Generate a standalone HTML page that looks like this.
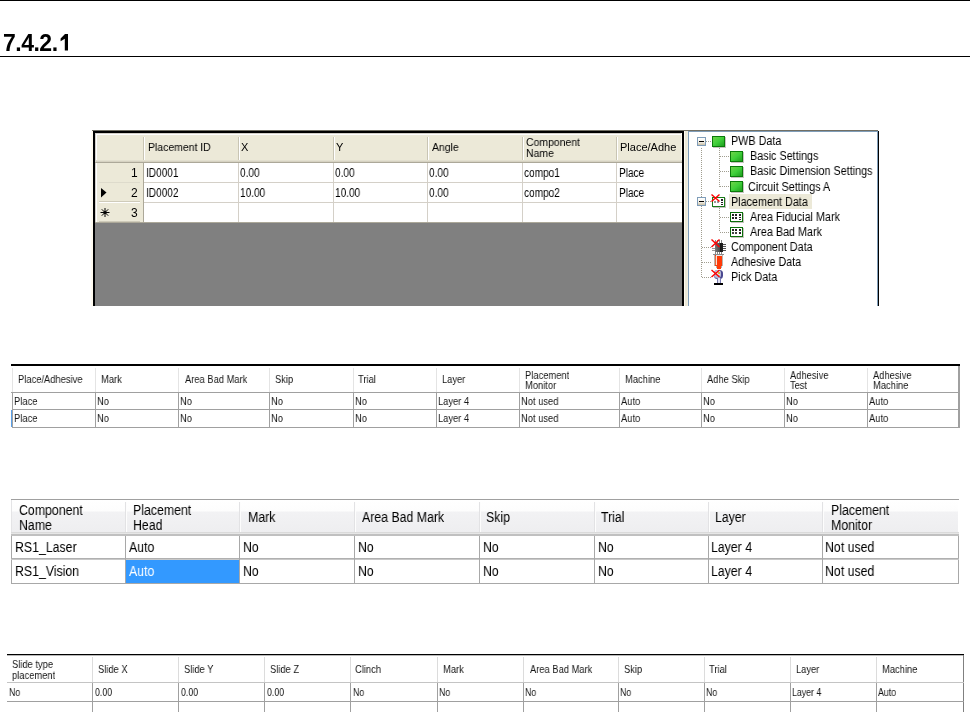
<!DOCTYPE html><html><head><meta charset="utf-8"><style>
html,body{margin:0;padding:0;background:#fff;width:970px;height:712px;overflow:hidden;position:relative}
div{position:absolute;box-sizing:border-box}
.t{font-family:"Liberation Sans",sans-serif;white-space:nowrap;color:#000;will-change:transform}
</style></head><body>
<div style="left:0px;top:0px;width:970px;height:1px;background:#000;"></div>
<div class="t" style="left:3px;top:32px;font-weight:bold;font-size:23px;line-height:23px;letter-spacing:-0.5px">7.4.2.</div>
<svg style="position:absolute;left:55px;top:30px" width="20" height="25" viewBox="55 30 20 25"><polygon points="65,34 68,34 68,50.6 64.8,50.6 64.8,38.8 60.6,41.3 60.6,38.4" fill="#000"/></svg>
<div style="left:0px;top:56px;width:970px;height:1px;background:#000;"></div>
<div style="left:92px;top:130px;width:592px;height:1px;background:#716f64;"></div>
<div style="left:684px;top:130px;width:194px;height:1px;background:#716f64;"></div>
<div style="left:91px;top:131px;width:2px;height:175px;background:#fffbf0;"></div>
<div style="left:93px;top:131px;width:591px;height:175px;background:#000;"></div>
<div style="left:95px;top:133px;width:587px;height:173px;background:#808080;"></div>
<div style="left:95px;top:133px;width:587px;height:30px;background:#ece9d8;"></div>
<div style="left:95px;top:133px;width:587px;height:1px;background:#d4d0c8;"></div>
<div style="left:96px;top:134px;width:586px;height:1px;background:#fff;"></div>
<div style="left:95px;top:134px;width:1px;height:29px;background:#d4d0c8;"></div>
<div style="left:96px;top:134px;width:1px;height:29px;background:#fff;"></div>
<div style="left:681px;top:133px;width:1px;height:30px;background:#fffbf0;"></div>
<div style="left:96px;top:160px;width:586px;height:1px;background:#e2dfcf;"></div>
<div style="left:96px;top:161px;width:586px;height:1px;background:#d6d2c2;"></div>
<div style="left:95px;top:162px;width:587px;height:1px;background:#aca899;"></div>
<div style="left:143px;top:137px;width:1px;height:23px;background:#c9c5b4;"></div>
<div style="left:144px;top:137px;width:1px;height:23px;background:#fff;"></div>
<div style="left:238px;top:137px;width:1px;height:23px;background:#c9c5b4;"></div>
<div style="left:239px;top:137px;width:1px;height:23px;background:#fff;"></div>
<div style="left:333px;top:137px;width:1px;height:23px;background:#c9c5b4;"></div>
<div style="left:334px;top:137px;width:1px;height:23px;background:#fff;"></div>
<div style="left:427px;top:137px;width:1px;height:23px;background:#c9c5b4;"></div>
<div style="left:428px;top:137px;width:1px;height:23px;background:#fff;"></div>
<div style="left:522px;top:137px;width:1px;height:23px;background:#c9c5b4;"></div>
<div style="left:523px;top:137px;width:1px;height:23px;background:#fff;"></div>
<div style="left:616px;top:137px;width:1px;height:23px;background:#c9c5b4;"></div>
<div style="left:617px;top:137px;width:1px;height:23px;background:#fff;"></div>
<div style="left:144px;top:163px;width:538px;height:60px;background:#fff;"></div>
<div style="left:95px;top:163px;width:48px;height:60px;background:#ece9d8;"></div>
<div style="left:95px;top:163px;width:1px;height:60px;background:#d4d0c8;"></div>
<div style="left:96px;top:163px;width:1px;height:60px;background:#fff;"></div>
<div style="left:144px;top:182px;width:538px;height:1px;background:#d4d0c8;"></div>
<div style="left:144px;top:202px;width:538px;height:1px;background:#d4d0c8;"></div>
<div style="left:144px;top:222px;width:538px;height:1px;background:#d4d0c8;"></div>
<div style="left:99px;top:182px;width:41px;height:1px;background:#dedbcc;"></div>
<div style="left:99px;top:201px;width:41px;height:1px;background:#cfcbba;"></div>
<div style="left:99px;top:202px;width:41px;height:1px;background:#fff;"></div>
<div style="left:99px;top:221px;width:41px;height:1px;background:#cfcbba;"></div>
<div style="left:99px;top:222px;width:41px;height:1px;background:#fff;"></div>
<div style="left:95px;top:222px;width:49px;height:1px;background:#aca899;"></div>
<div style="left:143px;top:163px;width:1px;height:60px;background:#aca899;"></div>
<div style="left:238px;top:163px;width:1px;height:60px;background:#d4d0c8;"></div>
<div style="left:333px;top:163px;width:1px;height:60px;background:#d4d0c8;"></div>
<div style="left:427px;top:163px;width:1px;height:60px;background:#d4d0c8;"></div>
<div style="left:522px;top:163px;width:1px;height:60px;background:#d4d0c8;"></div>
<div style="left:616px;top:163px;width:1px;height:60px;background:#d4d0c8;"></div>
<div style="left:144px;top:222px;width:538px;height:1px;background:#aca899;"></div>
<div class="t" style="left:148px;top:142px;font-size:11px;line-height:11px;letter-spacing:0px;transform:scaleX(0.95);transform-origin:0 0;">Placement ID</div>
<div class="t" style="left:241px;top:142px;font-size:11px;line-height:11px;letter-spacing:0px;transform:scaleX(0.95);transform-origin:0 0;">X</div>
<div class="t" style="left:336px;top:142px;font-size:11px;line-height:11px;letter-spacing:0px;transform:scaleX(0.95);transform-origin:0 0;">Y</div>
<div class="t" style="left:432px;top:142px;font-size:11px;line-height:11px;letter-spacing:0px;transform:scaleX(0.95);transform-origin:0 0;">Angle</div>
<div class="t" style="left:526px;top:137px;font-size:11px;line-height:11px;letter-spacing:0px;transform:scaleX(0.95);transform-origin:0 0;">Component</div>
<div class="t" style="left:526px;top:148px;font-size:11px;line-height:11px;letter-spacing:0px;transform:scaleX(0.95);transform-origin:0 0;">Name</div>
<div class="t" style="left:620px;top:142px;font-size:11px;line-height:11px;letter-spacing:0px;transform:scaleX(1.0);transform-origin:0 0;">Place/Adhe</div>
<div class="t" style="left:131px;top:167px;font-size:12px;line-height:12px;letter-spacing:-1px;">1</div>
<div class="t" style="left:131px;top:187px;font-size:12px;line-height:12px;letter-spacing:-1px;">2</div>
<div class="t" style="left:131px;top:207px;font-size:12px;line-height:12px;letter-spacing:-1px;">3</div>
<svg style="position:absolute;left:95px;top:183px" width="48" height="40" viewBox="95 183 48 40"><polygon points="101,188 106.5,192.5 101,197.5" fill="#000"/><g stroke="#000" stroke-width="1"><line x1="105" y1="208" x2="105" y2="217"/><line x1="100.5" y1="212.5" x2="109.5" y2="212.5"/><line x1="101.8" y1="209.3" x2="108.2" y2="215.7"/><line x1="108.2" y1="209.3" x2="101.8" y2="215.7"/></g><circle cx="105" cy="212.5" r="1.6" fill="#000"/></svg>
<div class="t" style="left:146px;top:167px;font-size:12px;line-height:12px;letter-spacing:0px;transform:scaleX(0.84);transform-origin:0 0;">ID0001</div>
<div class="t" style="left:240px;top:167px;font-size:12px;line-height:12px;letter-spacing:0px;transform:scaleX(0.84);transform-origin:0 0;">0.00</div>
<div class="t" style="left:335px;top:167px;font-size:12px;line-height:12px;letter-spacing:0px;transform:scaleX(0.84);transform-origin:0 0;">0.00</div>
<div class="t" style="left:429px;top:167px;font-size:12px;line-height:12px;letter-spacing:0px;transform:scaleX(0.84);transform-origin:0 0;">0.00</div>
<div class="t" style="left:524px;top:167px;font-size:12px;line-height:12px;letter-spacing:0px;transform:scaleX(0.84);transform-origin:0 0;">compo1</div>
<div class="t" style="left:619px;top:167px;font-size:12px;line-height:12px;letter-spacing:0px;transform:scaleX(0.84);transform-origin:0 0;">Place</div>
<div class="t" style="left:146px;top:187px;font-size:12px;line-height:12px;letter-spacing:0px;transform:scaleX(0.84);transform-origin:0 0;">ID0002</div>
<div class="t" style="left:240px;top:187px;font-size:12px;line-height:12px;letter-spacing:0px;transform:scaleX(0.84);transform-origin:0 0;">10.00</div>
<div class="t" style="left:335px;top:187px;font-size:12px;line-height:12px;letter-spacing:0px;transform:scaleX(0.84);transform-origin:0 0;">10.00</div>
<div class="t" style="left:429px;top:187px;font-size:12px;line-height:12px;letter-spacing:0px;transform:scaleX(0.84);transform-origin:0 0;">0.00</div>
<div class="t" style="left:524px;top:187px;font-size:12px;line-height:12px;letter-spacing:0px;transform:scaleX(0.84);transform-origin:0 0;">compo2</div>
<div class="t" style="left:619px;top:187px;font-size:12px;line-height:12px;letter-spacing:0px;transform:scaleX(0.84);transform-origin:0 0;">Place</div>
<div style="left:684px;top:131px;width:1px;height:175px;background:#fffbf0;"></div>
<div style="left:685px;top:131px;width:2px;height:175px;background:#ece9d8;"></div>
<div style="left:687px;top:131px;width:1px;height:175px;background:#f1efe2;"></div>
<div style="left:688px;top:131px;width:191px;height:175px;background:#7f9db9;"></div>
<div style="left:689px;top:132px;width:188px;height:174px;background:#fff;"></div>
<div style="left:878px;top:131px;width:1px;height:175px;background:#000;"></div>
<div style="left:729px;top:194px;width:83px;height:15px;background:#ece9d8"></div>
<svg style="position:absolute;left:688px;top:130px" width="190" height="176" viewBox="688 130 190 176" shape-rendering="crispEdges">
<defs>
<linearGradient id="gsq" x1="0" y1="0" x2="1" y2="1"><stop offset="0" stop-color="#6fd24a"/><stop offset="0.5" stop-color="#3fcf3a"/><stop offset="1" stop-color="#1f9f1f"/></linearGradient>
<linearGradient id="gexp" x1="0" y1="0" x2="0" y2="1"><stop offset="0" stop-color="#ffffff"/><stop offset="0.55" stop-color="#f4f2ea"/><stop offset="1" stop-color="#c9bfa6"/></linearGradient>
<linearGradient id="gchip" x1="0" y1="0" x2="1" y2="0"><stop offset="0" stop-color="#7a7a7a"/><stop offset="0.6" stop-color="#4a4a4a"/><stop offset="0.61" stop-color="#151515"/><stop offset="1" stop-color="#222"/></linearGradient>
<pattern id="dv" width="1" height="2" patternUnits="userSpaceOnUse"><rect width="1" height="1" fill="#a09d8f"/></pattern>
<pattern id="dh" width="2" height="1" patternUnits="userSpaceOnUse"><rect width="1" height="1" fill="#a09d8f"/></pattern>
</defs>
<!-- dotted lines -->
<rect x="701" y="147" width="1" height="131" fill="url(#dv)"/>
<rect x="706" y="141" width="6" height="1" fill="url(#dh)"/>
<rect x="706" y="201" width="6" height="1" fill="url(#dh)"/>
<rect x="702" y="247" width="10" height="1" fill="url(#dh)"/>
<rect x="702" y="262" width="10" height="1" fill="url(#dh)"/>
<rect x="702" y="277" width="10" height="1" fill="url(#dh)"/>
<rect x="719" y="148" width="1" height="39" fill="url(#dv)"/>
<rect x="720" y="156" width="10" height="1" fill="url(#dh)"/>
<rect x="720" y="171" width="10" height="1" fill="url(#dh)"/>
<rect x="720" y="186" width="10" height="1" fill="url(#dh)"/>
<rect x="719" y="208" width="1" height="24" fill="url(#dv)"/>
<rect x="720" y="217" width="10" height="1" fill="url(#dh)"/>
<rect x="720" y="232" width="10" height="1" fill="url(#dh)"/>
<!-- expanders -->
<g>
<rect x="697" y="137" width="9" height="9" fill="#7f9db9"/><rect x="698" y="138" width="7" height="7" fill="url(#gexp)"/><rect x="699" y="141" width="5" height="1" fill="#000"/>
<rect x="697" y="197" width="9" height="9" fill="#7f9db9"/><rect x="698" y="198" width="7" height="7" fill="url(#gexp)"/><rect x="699" y="201" width="5" height="1" fill="#000"/>
</g>
<!-- green squares -->
<g>
<rect x="713" y="137" width="13" height="11" fill="#c8c4c0"/>
<rect x="712" y="136" width="13" height="11" fill="#0a7a0a"/><rect x="713" y="137" width="11" height="9" fill="url(#gsq)"/>
<rect x="731" y="152" width="13" height="11" fill="#c8c4c0"/>
<rect x="730" y="151" width="13" height="11" fill="#0a7a0a"/><rect x="731" y="152" width="11" height="9" fill="url(#gsq)"/>
<rect x="731" y="167" width="13" height="11" fill="#c8c4c0"/>
<rect x="730" y="166" width="13" height="11" fill="#0a7a0a"/><rect x="731" y="167" width="11" height="9" fill="url(#gsq)"/>
<rect x="731" y="182" width="13" height="11" fill="#c8c4c0"/>
<rect x="730" y="181" width="13" height="11" fill="#0a7a0a"/><rect x="731" y="182" width="11" height="9" fill="url(#gsq)"/>
</g>
<!-- grid icons -->
<g>
<rect x="713" y="198" width="13" height="10" fill="#c8c4c0"/>
<rect x="712" y="197" width="13" height="10" fill="#1a7a1a"/><rect x="713" y="198" width="11" height="8" fill="#fff"/>
<rect x="714" y="201" width="2" height="2" fill="#999"/><rect x="717" y="201" width="2" height="2" fill="#999"/><rect x="721" y="199" width="2" height="2" fill="#222"/><rect x="721" y="202" width="2" height="1" fill="#222"/><rect x="721" y="204" width="2" height="1" fill="#222"/>
<rect x="731" y="213" width="13" height="10" fill="#c8c4c0"/>
<rect x="730" y="212" width="13" height="10" fill="#0b6f0b"/><rect x="731" y="213" width="11" height="8" fill="#fff"/>
<rect x="732" y="214" width="2" height="2" fill="#222"/><rect x="735" y="214" width="2" height="2" fill="#222"/><rect x="739" y="214" width="2" height="2" fill="#222"/>
<rect x="732" y="217" width="2" height="2" fill="#222"/><rect x="735" y="217" width="2" height="2" fill="#222"/><rect x="739" y="217" width="2" height="1" fill="#222"/><rect x="739" y="219" width="2" height="1" fill="#222"/>
<rect x="731" y="228" width="13" height="10" fill="#c8c4c0"/>
<rect x="730" y="227" width="13" height="10" fill="#0b6f0b"/><rect x="731" y="228" width="11" height="8" fill="#fff"/>
<rect x="732" y="229" width="2" height="2" fill="#222"/><rect x="735" y="229" width="2" height="2" fill="#222"/><rect x="739" y="229" width="2" height="2" fill="#222"/>
<rect x="732" y="232" width="2" height="2" fill="#444"/><rect x="735" y="232" width="2" height="2" fill="#444"/><rect x="739" y="232" width="2" height="2" fill="#222"/>
</g>
<!-- chip -->
<g>
<rect x="715" y="240" width="1" height="3" fill="#888"/><rect x="717" y="240" width="1" height="3" fill="#888"/><rect x="719" y="240" width="1" height="3" fill="#888"/><rect x="721" y="240" width="1" height="3" fill="#888"/>
<rect x="715" y="252" width="1" height="2" fill="#888"/><rect x="717" y="252" width="1" height="2" fill="#888"/><rect x="719" y="252" width="1" height="2" fill="#888"/><rect x="721" y="252" width="1" height="2" fill="#888"/>
<rect x="723" y="244" width="3" height="1" fill="#555"/><rect x="723" y="246" width="3" height="1" fill="#555"/><rect x="723" y="248" width="3" height="1" fill="#555"/><rect x="723" y="250" width="3" height="1" fill="#555"/>
<rect x="712" y="248" width="3" height="1" fill="#999"/><rect x="712" y="250" width="3" height="1" fill="#999"/>
<rect x="715" y="243" width="8" height="9" fill="url(#gchip)"/>
</g>
<!-- syringe -->
<g>
<rect x="713" y="254" width="11" height="1" fill="#8a8a8a"/>
<rect x="714" y="255" width="9" height="11" fill="#b8b4b0"/>
<rect x="715" y="255" width="7" height="11" fill="#ff3a08"/>
<rect x="715" y="256" width="1" height="9" fill="#e86a40"/>
<rect x="716" y="256" width="1" height="9" fill="#ffe0d0"/>
<rect x="716" y="255" width="6" height="1" fill="#e8e8e8"/>
<rect x="717" y="266" width="4" height="3" fill="#ff3a08"/>
<rect x="716" y="266" width="1" height="2" fill="#b0b0b0"/><rect x="721" y="266" width="1" height="2" fill="#b0b0b0"/>
</g>
<!-- nozzle -->
<g>
<rect x="714" y="270" width="9" height="9" rx="3.5" fill="#4a4890" shape-rendering="auto"/>
<rect x="714" y="270" width="7" height="8" rx="3" fill="#b8bad8" shape-rendering="auto"/>
<rect x="716" y="271" width="4" height="4" fill="#dcdde8"/>
<rect x="718" y="272" width="2" height="2" fill="#d8b040"/>
<rect x="717" y="278" width="4" height="5" fill="#7878b0"/>
<rect x="718" y="278" width="2" height="5" fill="#e0e0f0"/>
<rect x="714" y="283" width="9" height="2" fill="#000"/>
</g>
<!-- red Xs -->
<g stroke="#ff0000" stroke-width="1.4" shape-rendering="auto" fill="none">
<path d="M711.5 194.5 L719.5 201.5 M719.5 194.5 L711.5 201.5"/>
<path d="M711.5 239.5 L719.5 247 M719.5 239.5 L711.5 247"/>
<path d="M711.5 270 L719.5 277 M719.5 270 L711.5 277"/>
</g>
</svg>

<div class="t" style="left:731px;top:135px;font-size:12px;line-height:12px;letter-spacing:0px;transform:scaleX(0.9);transform-origin:0 0;">PWB Data</div>
<div class="t" style="left:750px;top:150px;font-size:12px;line-height:12px;letter-spacing:0px;transform:scaleX(0.9);transform-origin:0 0;">Basic Settings</div>
<div class="t" style="left:750px;top:165px;font-size:12px;line-height:12px;letter-spacing:0px;transform:scaleX(0.9);transform-origin:0 0;">Basic Dimension Settings</div>
<div class="t" style="left:748px;top:181px;font-size:12px;line-height:12px;letter-spacing:0px;transform:scaleX(0.9);transform-origin:0 0;">Circuit Settings A</div>
<div class="t" style="left:731px;top:196px;font-size:12px;line-height:12px;letter-spacing:0px;transform:scaleX(0.9);transform-origin:0 0;">Placement Data</div>
<div class="t" style="left:750px;top:211px;font-size:12px;line-height:12px;letter-spacing:0px;transform:scaleX(0.9);transform-origin:0 0;">Area Fiducial Mark</div>
<div class="t" style="left:750px;top:226px;font-size:12px;line-height:12px;letter-spacing:0px;transform:scaleX(0.9);transform-origin:0 0;">Area Bad Mark</div>
<div class="t" style="left:731px;top:241px;font-size:12px;line-height:12px;letter-spacing:0px;transform:scaleX(0.9);transform-origin:0 0;">Component Data</div>
<div class="t" style="left:731px;top:256px;font-size:12px;line-height:12px;letter-spacing:0px;transform:scaleX(0.9);transform-origin:0 0;">Adhesive Data</div>
<div class="t" style="left:731px;top:271px;font-size:12px;line-height:12px;letter-spacing:0px;transform:scaleX(0.9);transform-origin:0 0;">Pick Data</div>
<div style="left:11px;top:364px;width:949px;height:2px;background:#000;"></div>
<div style="left:12px;top:366px;width:947px;height:26px;background:#fff;"></div>
<div style="left:12px;top:368px;width:1px;height:24px;background:#e4e4e4;"></div>
<div style="left:95px;top:368px;width:1px;height:24px;background:#e4e4e4;"></div>
<div style="left:178px;top:368px;width:1px;height:24px;background:#e4e4e4;"></div>
<div style="left:269px;top:368px;width:1px;height:24px;background:#e4e4e4;"></div>
<div style="left:353px;top:368px;width:1px;height:24px;background:#e4e4e4;"></div>
<div style="left:436px;top:368px;width:1px;height:24px;background:#e4e4e4;"></div>
<div style="left:519px;top:368px;width:1px;height:24px;background:#e4e4e4;"></div>
<div style="left:619px;top:368px;width:1px;height:24px;background:#e4e4e4;"></div>
<div style="left:701px;top:368px;width:1px;height:24px;background:#e4e4e4;"></div>
<div style="left:784px;top:368px;width:1px;height:24px;background:#e4e4e4;"></div>
<div style="left:867px;top:368px;width:1px;height:24px;background:#e4e4e4;"></div>
<div style="left:958px;top:366px;width:1px;height:26px;background:#e4e4e4;"></div>
<div style="left:11px;top:392px;width:949px;height:1px;background:#a0a0a0;"></div>
<div style="left:12px;top:409px;width:947px;height:1px;background:#a0a0a0;"></div>
<div style="left:12px;top:427px;width:947px;height:1px;background:#a0a0a0;"></div>
<div style="left:12px;top:392px;width:1px;height:36px;background:#a0a0a0;"></div>
<div style="left:11px;top:410px;width:1px;height:17px;background:#5aa0e8;"></div>
<div style="left:95px;top:392px;width:1px;height:36px;background:#a0a0a0;"></div>
<div style="left:178px;top:392px;width:1px;height:36px;background:#a0a0a0;"></div>
<div style="left:269px;top:392px;width:1px;height:36px;background:#a0a0a0;"></div>
<div style="left:353px;top:392px;width:1px;height:36px;background:#a0a0a0;"></div>
<div style="left:436px;top:392px;width:1px;height:36px;background:#a0a0a0;"></div>
<div style="left:519px;top:392px;width:1px;height:36px;background:#a0a0a0;"></div>
<div style="left:619px;top:392px;width:1px;height:36px;background:#a0a0a0;"></div>
<div style="left:701px;top:392px;width:1px;height:36px;background:#a0a0a0;"></div>
<div style="left:784px;top:392px;width:1px;height:36px;background:#a0a0a0;"></div>
<div style="left:867px;top:392px;width:1px;height:36px;background:#a0a0a0;"></div>
<div style="left:958px;top:366px;width:2px;height:62px;background:#a0a0a0;"></div>
<div class="t" style="left:18px;top:374px;font-size:11px;line-height:11px;letter-spacing:0px;transform:scaleX(0.85);transform-origin:0 0;color:#151515">Place/Adhesive</div>
<div class="t" style="left:101px;top:374px;font-size:11px;line-height:11px;letter-spacing:0px;transform:scaleX(0.85);transform-origin:0 0;color:#151515">Mark</div>
<div class="t" style="left:185px;top:374px;font-size:11px;line-height:11px;letter-spacing:0px;transform:scaleX(0.85);transform-origin:0 0;color:#151515">Area Bad Mark</div>
<div class="t" style="left:275px;top:374px;font-size:11px;line-height:11px;letter-spacing:0px;transform:scaleX(0.85);transform-origin:0 0;color:#151515">Skip</div>
<div class="t" style="left:358px;top:374px;font-size:11px;line-height:11px;letter-spacing:0px;transform:scaleX(0.85);transform-origin:0 0;color:#151515">Trial</div>
<div class="t" style="left:442px;top:374px;font-size:11px;line-height:11px;letter-spacing:0px;transform:scaleX(0.85);transform-origin:0 0;color:#151515">Layer</div>
<div class="t" style="left:625px;top:374px;font-size:11px;line-height:11px;letter-spacing:0px;transform:scaleX(0.85);transform-origin:0 0;color:#151515">Machine</div>
<div class="t" style="left:707px;top:374px;font-size:11px;line-height:11px;letter-spacing:0px;transform:scaleX(0.85);transform-origin:0 0;color:#151515">Adhe Skip</div>
<div class="t" style="left:525px;top:370px;font-size:11px;line-height:11px;letter-spacing:0px;transform:scaleX(0.85);transform-origin:0 0;color:#151515">Placement</div>
<div class="t" style="left:525px;top:380px;font-size:11px;line-height:11px;letter-spacing:0px;transform:scaleX(0.85);transform-origin:0 0;color:#151515">Monitor</div>
<div class="t" style="left:790px;top:370px;font-size:11px;line-height:11px;letter-spacing:0px;transform:scaleX(0.85);transform-origin:0 0;color:#151515">Adhesive</div>
<div class="t" style="left:790px;top:380px;font-size:11px;line-height:11px;letter-spacing:0px;transform:scaleX(0.85);transform-origin:0 0;color:#151515">Test</div>
<div class="t" style="left:873px;top:370px;font-size:11px;line-height:11px;letter-spacing:0px;transform:scaleX(0.85);transform-origin:0 0;color:#151515">Adhesive</div>
<div class="t" style="left:873px;top:380px;font-size:11px;line-height:11px;letter-spacing:0px;transform:scaleX(0.85);transform-origin:0 0;color:#151515">Machine</div>
<div class="t" style="left:14px;top:396px;font-size:11px;line-height:11px;letter-spacing:0px;transform:scaleX(0.85);transform-origin:0 0;color:#151515">Place</div>
<div class="t" style="left:97px;top:396px;font-size:11px;line-height:11px;letter-spacing:0px;transform:scaleX(0.85);transform-origin:0 0;color:#151515">No</div>
<div class="t" style="left:180px;top:396px;font-size:11px;line-height:11px;letter-spacing:0px;transform:scaleX(0.85);transform-origin:0 0;color:#151515">No</div>
<div class="t" style="left:271px;top:396px;font-size:11px;line-height:11px;letter-spacing:0px;transform:scaleX(0.85);transform-origin:0 0;color:#151515">No</div>
<div class="t" style="left:355px;top:396px;font-size:11px;line-height:11px;letter-spacing:0px;transform:scaleX(0.85);transform-origin:0 0;color:#151515">No</div>
<div class="t" style="left:438px;top:396px;font-size:11px;line-height:11px;letter-spacing:0px;transform:scaleX(0.85);transform-origin:0 0;color:#151515">Layer 4</div>
<div class="t" style="left:521px;top:396px;font-size:11px;line-height:11px;letter-spacing:0px;transform:scaleX(0.85);transform-origin:0 0;color:#151515">Not used</div>
<div class="t" style="left:621px;top:396px;font-size:11px;line-height:11px;letter-spacing:0px;transform:scaleX(0.85);transform-origin:0 0;color:#151515">Auto</div>
<div class="t" style="left:703px;top:396px;font-size:11px;line-height:11px;letter-spacing:0px;transform:scaleX(0.85);transform-origin:0 0;color:#151515">No</div>
<div class="t" style="left:786px;top:396px;font-size:11px;line-height:11px;letter-spacing:0px;transform:scaleX(0.85);transform-origin:0 0;color:#151515">No</div>
<div class="t" style="left:869px;top:396px;font-size:11px;line-height:11px;letter-spacing:0px;transform:scaleX(0.85);transform-origin:0 0;color:#151515">Auto</div>
<div class="t" style="left:14px;top:413px;font-size:11px;line-height:11px;letter-spacing:0px;transform:scaleX(0.85);transform-origin:0 0;color:#151515">Place</div>
<div class="t" style="left:97px;top:413px;font-size:11px;line-height:11px;letter-spacing:0px;transform:scaleX(0.85);transform-origin:0 0;color:#151515">No</div>
<div class="t" style="left:180px;top:413px;font-size:11px;line-height:11px;letter-spacing:0px;transform:scaleX(0.85);transform-origin:0 0;color:#151515">No</div>
<div class="t" style="left:271px;top:413px;font-size:11px;line-height:11px;letter-spacing:0px;transform:scaleX(0.85);transform-origin:0 0;color:#151515">No</div>
<div class="t" style="left:355px;top:413px;font-size:11px;line-height:11px;letter-spacing:0px;transform:scaleX(0.85);transform-origin:0 0;color:#151515">No</div>
<div class="t" style="left:438px;top:413px;font-size:11px;line-height:11px;letter-spacing:0px;transform:scaleX(0.85);transform-origin:0 0;color:#151515">Layer 4</div>
<div class="t" style="left:521px;top:413px;font-size:11px;line-height:11px;letter-spacing:0px;transform:scaleX(0.85);transform-origin:0 0;color:#151515">Not used</div>
<div class="t" style="left:621px;top:413px;font-size:11px;line-height:11px;letter-spacing:0px;transform:scaleX(0.85);transform-origin:0 0;color:#151515">Auto</div>
<div class="t" style="left:703px;top:413px;font-size:11px;line-height:11px;letter-spacing:0px;transform:scaleX(0.85);transform-origin:0 0;color:#151515">No</div>
<div class="t" style="left:786px;top:413px;font-size:11px;line-height:11px;letter-spacing:0px;transform:scaleX(0.85);transform-origin:0 0;color:#151515">No</div>
<div class="t" style="left:869px;top:413px;font-size:11px;line-height:11px;letter-spacing:0px;transform:scaleX(0.85);transform-origin:0 0;color:#151515">Auto</div>
<div style="left:11px;top:499px;width:948px;height:1px;background:#a0a0a0;"></div>
<div style="left:11px;top:500px;width:947px;height:32px;background:linear-gradient(#ffffff 0,#fdfdfd 11px,#f2f2f4 12px,#eeeef0 32px)"></div>
<div style="left:11px;top:500px;width:1px;height:32px;background:#e4e4e6;"></div>
<div style="left:125px;top:502px;width:1px;height:30px;background:#e2e2e4;"></div>
<div style="left:126px;top:502px;width:1px;height:30px;background:#fdfdfd;"></div>
<div style="left:239px;top:502px;width:1px;height:30px;background:#e2e2e4;"></div>
<div style="left:240px;top:502px;width:1px;height:30px;background:#fdfdfd;"></div>
<div style="left:354px;top:502px;width:1px;height:30px;background:#e2e2e4;"></div>
<div style="left:355px;top:502px;width:1px;height:30px;background:#fdfdfd;"></div>
<div style="left:479px;top:502px;width:1px;height:30px;background:#e2e2e4;"></div>
<div style="left:480px;top:502px;width:1px;height:30px;background:#fdfdfd;"></div>
<div style="left:594px;top:502px;width:1px;height:30px;background:#e2e2e4;"></div>
<div style="left:595px;top:502px;width:1px;height:30px;background:#fdfdfd;"></div>
<div style="left:708px;top:502px;width:1px;height:30px;background:#e2e2e4;"></div>
<div style="left:709px;top:502px;width:1px;height:30px;background:#fdfdfd;"></div>
<div style="left:822px;top:502px;width:1px;height:30px;background:#e2e2e4;"></div>
<div style="left:823px;top:502px;width:1px;height:30px;background:#fdfdfd;"></div>
<div style="left:11px;top:532px;width:948px;height:1px;background:#dadada;"></div>
<div style="left:11px;top:533px;width:948px;height:1px;background:#e6e6e6;"></div>
<div style="left:11px;top:534px;width:948px;height:2px;background:#c0c0c0;"></div>
<div style="left:11px;top:536px;width:1px;height:48px;background:#a8a8a8;"></div>
<div style="left:958px;top:536px;width:1px;height:48px;background:#a8a8a8;"></div>
<div style="left:11px;top:558px;width:948px;height:1px;background:#b0b0b0;"></div>
<div style="left:11px;top:559px;width:948px;height:1px;background:#c8c8c8;"></div>
<div style="left:11px;top:583px;width:948px;height:1px;background:#a8a8a8;"></div>
<div style="left:125px;top:536px;width:1px;height:47px;background:#a8a8a8;"></div>
<div style="left:239px;top:536px;width:1px;height:47px;background:#a8a8a8;"></div>
<div style="left:354px;top:536px;width:1px;height:47px;background:#a8a8a8;"></div>
<div style="left:479px;top:536px;width:1px;height:47px;background:#a8a8a8;"></div>
<div style="left:594px;top:536px;width:1px;height:47px;background:#a8a8a8;"></div>
<div style="left:708px;top:536px;width:1px;height:47px;background:#a8a8a8;"></div>
<div style="left:822px;top:536px;width:1px;height:47px;background:#a8a8a8;"></div>
<div style="left:126px;top:560px;width:113px;height:23px;background:#3399ff;"></div>
<div class="t" style="left:19px;top:503px;font-size:14px;line-height:14px;letter-spacing:0px;transform:scaleX(0.88);transform-origin:0 0;">Component</div>
<div class="t" style="left:19px;top:518px;font-size:14px;line-height:14px;letter-spacing:0px;transform:scaleX(0.88);transform-origin:0 0;">Name</div>
<div class="t" style="left:133px;top:503px;font-size:14px;line-height:14px;letter-spacing:0px;transform:scaleX(0.88);transform-origin:0 0;">Placement</div>
<div class="t" style="left:133px;top:518px;font-size:14px;line-height:14px;letter-spacing:0px;transform:scaleX(0.88);transform-origin:0 0;">Head</div>
<div class="t" style="left:248px;top:510px;font-size:14px;line-height:14px;letter-spacing:0px;transform:scaleX(0.88);transform-origin:0 0;">Mark</div>
<div class="t" style="left:362px;top:510px;font-size:14px;line-height:14px;letter-spacing:0px;transform:scaleX(0.88);transform-origin:0 0;">Area Bad Mark</div>
<div class="t" style="left:486px;top:510px;font-size:14px;line-height:14px;letter-spacing:0px;transform:scaleX(0.88);transform-origin:0 0;">Skip</div>
<div class="t" style="left:601px;top:510px;font-size:14px;line-height:14px;letter-spacing:0px;transform:scaleX(0.88);transform-origin:0 0;">Trial</div>
<div class="t" style="left:715px;top:510px;font-size:14px;line-height:14px;letter-spacing:0px;transform:scaleX(0.88);transform-origin:0 0;">Layer</div>
<div class="t" style="left:831px;top:503px;font-size:14px;line-height:14px;letter-spacing:0px;transform:scaleX(0.88);transform-origin:0 0;">Placement</div>
<div class="t" style="left:831px;top:518px;font-size:14px;line-height:14px;letter-spacing:0px;transform:scaleX(0.88);transform-origin:0 0;">Monitor</div>
<div class="t" style="left:15px;top:540px;font-size:14px;line-height:14px;letter-spacing:0px;transform:scaleX(0.88);transform-origin:0 0;">RS1_Laser</div>
<div class="t" style="left:129px;top:540px;font-size:14px;line-height:14px;letter-spacing:0px;transform:scaleX(0.88);transform-origin:0 0;">Auto</div>
<div class="t" style="left:243px;top:540px;font-size:14px;line-height:14px;letter-spacing:0px;transform:scaleX(0.88);transform-origin:0 0;">No</div>
<div class="t" style="left:358px;top:540px;font-size:14px;line-height:14px;letter-spacing:0px;transform:scaleX(0.88);transform-origin:0 0;">No</div>
<div class="t" style="left:483px;top:540px;font-size:14px;line-height:14px;letter-spacing:0px;transform:scaleX(0.88);transform-origin:0 0;">No</div>
<div class="t" style="left:598px;top:540px;font-size:14px;line-height:14px;letter-spacing:0px;transform:scaleX(0.88);transform-origin:0 0;">No</div>
<div class="t" style="left:711px;top:540px;font-size:14px;line-height:14px;letter-spacing:0px;transform:scaleX(0.88);transform-origin:0 0;">Layer 4</div>
<div class="t" style="left:825px;top:540px;font-size:14px;line-height:14px;letter-spacing:0px;transform:scaleX(0.88);transform-origin:0 0;">Not used</div>
<div class="t" style="left:15px;top:564px;font-size:14px;line-height:14px;letter-spacing:0px;transform:scaleX(0.88);transform-origin:0 0;">RS1_Vision</div>
<div class="t" style="left:129px;top:564px;font-size:14px;line-height:14px;letter-spacing:0px;transform:scaleX(0.88);transform-origin:0 0;color:#fff">Auto</div>
<div class="t" style="left:243px;top:564px;font-size:14px;line-height:14px;letter-spacing:0px;transform:scaleX(0.88);transform-origin:0 0;">No</div>
<div class="t" style="left:358px;top:564px;font-size:14px;line-height:14px;letter-spacing:0px;transform:scaleX(0.88);transform-origin:0 0;">No</div>
<div class="t" style="left:483px;top:564px;font-size:14px;line-height:14px;letter-spacing:0px;transform:scaleX(0.88);transform-origin:0 0;">No</div>
<div class="t" style="left:598px;top:564px;font-size:14px;line-height:14px;letter-spacing:0px;transform:scaleX(0.88);transform-origin:0 0;">No</div>
<div class="t" style="left:711px;top:564px;font-size:14px;line-height:14px;letter-spacing:0px;transform:scaleX(0.88);transform-origin:0 0;">Layer 4</div>
<div class="t" style="left:825px;top:564px;font-size:14px;line-height:14px;letter-spacing:0px;transform:scaleX(0.88);transform-origin:0 0;">Not used</div>
<div style="left:7px;top:654px;width:957px;height:1px;background:#000;"></div>
<div style="left:7px;top:655px;width:957px;height:1px;background:#b8b8b8;"></div>
<div style="left:92px;top:657px;width:1px;height:25px;background:#dcdcdc;"></div>
<div style="left:178px;top:657px;width:1px;height:25px;background:#dcdcdc;"></div>
<div style="left:264px;top:657px;width:1px;height:25px;background:#dcdcdc;"></div>
<div style="left:350px;top:657px;width:1px;height:25px;background:#dcdcdc;"></div>
<div style="left:437px;top:657px;width:1px;height:25px;background:#dcdcdc;"></div>
<div style="left:523px;top:657px;width:1px;height:25px;background:#dcdcdc;"></div>
<div style="left:618px;top:657px;width:1px;height:25px;background:#dcdcdc;"></div>
<div style="left:704px;top:657px;width:1px;height:25px;background:#dcdcdc;"></div>
<div style="left:790px;top:657px;width:1px;height:25px;background:#dcdcdc;"></div>
<div style="left:876px;top:657px;width:1px;height:25px;background:#dcdcdc;"></div>
<div style="left:963px;top:655px;width:1px;height:57px;background:#808080;"></div>
<div style="left:7px;top:682px;width:957px;height:1px;background:#c4c4c4;"></div>
<div style="left:7px;top:701px;width:957px;height:1px;background:#a0a0a0;"></div>
<div style="left:92px;top:683px;width:1px;height:29px;background:#a0a0a0;"></div>
<div style="left:178px;top:683px;width:1px;height:29px;background:#a0a0a0;"></div>
<div style="left:264px;top:683px;width:1px;height:29px;background:#a0a0a0;"></div>
<div style="left:350px;top:683px;width:1px;height:29px;background:#a0a0a0;"></div>
<div style="left:437px;top:683px;width:1px;height:29px;background:#a0a0a0;"></div>
<div style="left:523px;top:683px;width:1px;height:29px;background:#a0a0a0;"></div>
<div style="left:618px;top:683px;width:1px;height:29px;background:#a0a0a0;"></div>
<div style="left:704px;top:683px;width:1px;height:29px;background:#a0a0a0;"></div>
<div style="left:790px;top:683px;width:1px;height:29px;background:#a0a0a0;"></div>
<div style="left:876px;top:683px;width:1px;height:29px;background:#a0a0a0;"></div>
<div class="t" style="left:12px;top:659px;font-size:11px;line-height:11px;letter-spacing:0px;transform:scaleX(0.85);transform-origin:0 0;color:#151515">Slide type</div>
<div class="t" style="left:12px;top:670px;font-size:11px;line-height:11px;letter-spacing:0px;transform:scaleX(0.85);transform-origin:0 0;color:#151515">placement</div>
<div class="t" style="left:98px;top:664px;font-size:11px;line-height:11px;letter-spacing:0px;transform:scaleX(0.85);transform-origin:0 0;color:#151515">Slide X</div>
<div class="t" style="left:184px;top:664px;font-size:11px;line-height:11px;letter-spacing:0px;transform:scaleX(0.85);transform-origin:0 0;color:#151515">Slide Y</div>
<div class="t" style="left:270px;top:664px;font-size:11px;line-height:11px;letter-spacing:0px;transform:scaleX(0.85);transform-origin:0 0;color:#151515">Slide Z</div>
<div class="t" style="left:355px;top:664px;font-size:11px;line-height:11px;letter-spacing:0px;transform:scaleX(0.85);transform-origin:0 0;color:#151515">Clinch</div>
<div class="t" style="left:443px;top:664px;font-size:11px;line-height:11px;letter-spacing:0px;transform:scaleX(0.85);transform-origin:0 0;color:#151515">Mark</div>
<div class="t" style="left:530px;top:664px;font-size:11px;line-height:11px;letter-spacing:0px;transform:scaleX(0.85);transform-origin:0 0;color:#151515">Area Bad Mark</div>
<div class="t" style="left:624px;top:664px;font-size:11px;line-height:11px;letter-spacing:0px;transform:scaleX(0.85);transform-origin:0 0;color:#151515">Skip</div>
<div class="t" style="left:709px;top:664px;font-size:11px;line-height:11px;letter-spacing:0px;transform:scaleX(0.85);transform-origin:0 0;color:#151515">Trial</div>
<div class="t" style="left:796px;top:664px;font-size:11px;line-height:11px;letter-spacing:0px;transform:scaleX(0.85);transform-origin:0 0;color:#151515">Layer</div>
<div class="t" style="left:882px;top:664px;font-size:11px;line-height:11px;letter-spacing:0px;transform:scaleX(0.85);transform-origin:0 0;color:#151515">Machine</div>
<div class="t" style="left:9px;top:687px;font-size:11px;line-height:11px;letter-spacing:0px;transform:scaleX(0.8);transform-origin:0 0;color:#151515">No</div>
<div class="t" style="left:95px;top:687px;font-size:11px;line-height:11px;letter-spacing:0px;transform:scaleX(0.8);transform-origin:0 0;color:#151515">0.00</div>
<div class="t" style="left:181px;top:687px;font-size:11px;line-height:11px;letter-spacing:0px;transform:scaleX(0.8);transform-origin:0 0;color:#151515">0.00</div>
<div class="t" style="left:267px;top:687px;font-size:11px;line-height:11px;letter-spacing:0px;transform:scaleX(0.8);transform-origin:0 0;color:#151515">0.00</div>
<div class="t" style="left:353px;top:687px;font-size:11px;line-height:11px;letter-spacing:0px;transform:scaleX(0.8);transform-origin:0 0;color:#151515">No</div>
<div class="t" style="left:439px;top:687px;font-size:11px;line-height:11px;letter-spacing:0px;transform:scaleX(0.8);transform-origin:0 0;color:#151515">No</div>
<div class="t" style="left:525px;top:687px;font-size:11px;line-height:11px;letter-spacing:0px;transform:scaleX(0.8);transform-origin:0 0;color:#151515">No</div>
<div class="t" style="left:620px;top:687px;font-size:11px;line-height:11px;letter-spacing:0px;transform:scaleX(0.8);transform-origin:0 0;color:#151515">No</div>
<div class="t" style="left:706px;top:687px;font-size:11px;line-height:11px;letter-spacing:0px;transform:scaleX(0.8);transform-origin:0 0;color:#151515">No</div>
<div class="t" style="left:792px;top:687px;font-size:11px;line-height:11px;letter-spacing:0px;transform:scaleX(0.8);transform-origin:0 0;color:#151515">Layer 4</div>
<div class="t" style="left:878px;top:687px;font-size:11px;line-height:11px;letter-spacing:0px;transform:scaleX(0.8);transform-origin:0 0;color:#151515">Auto</div>
</body></html>
